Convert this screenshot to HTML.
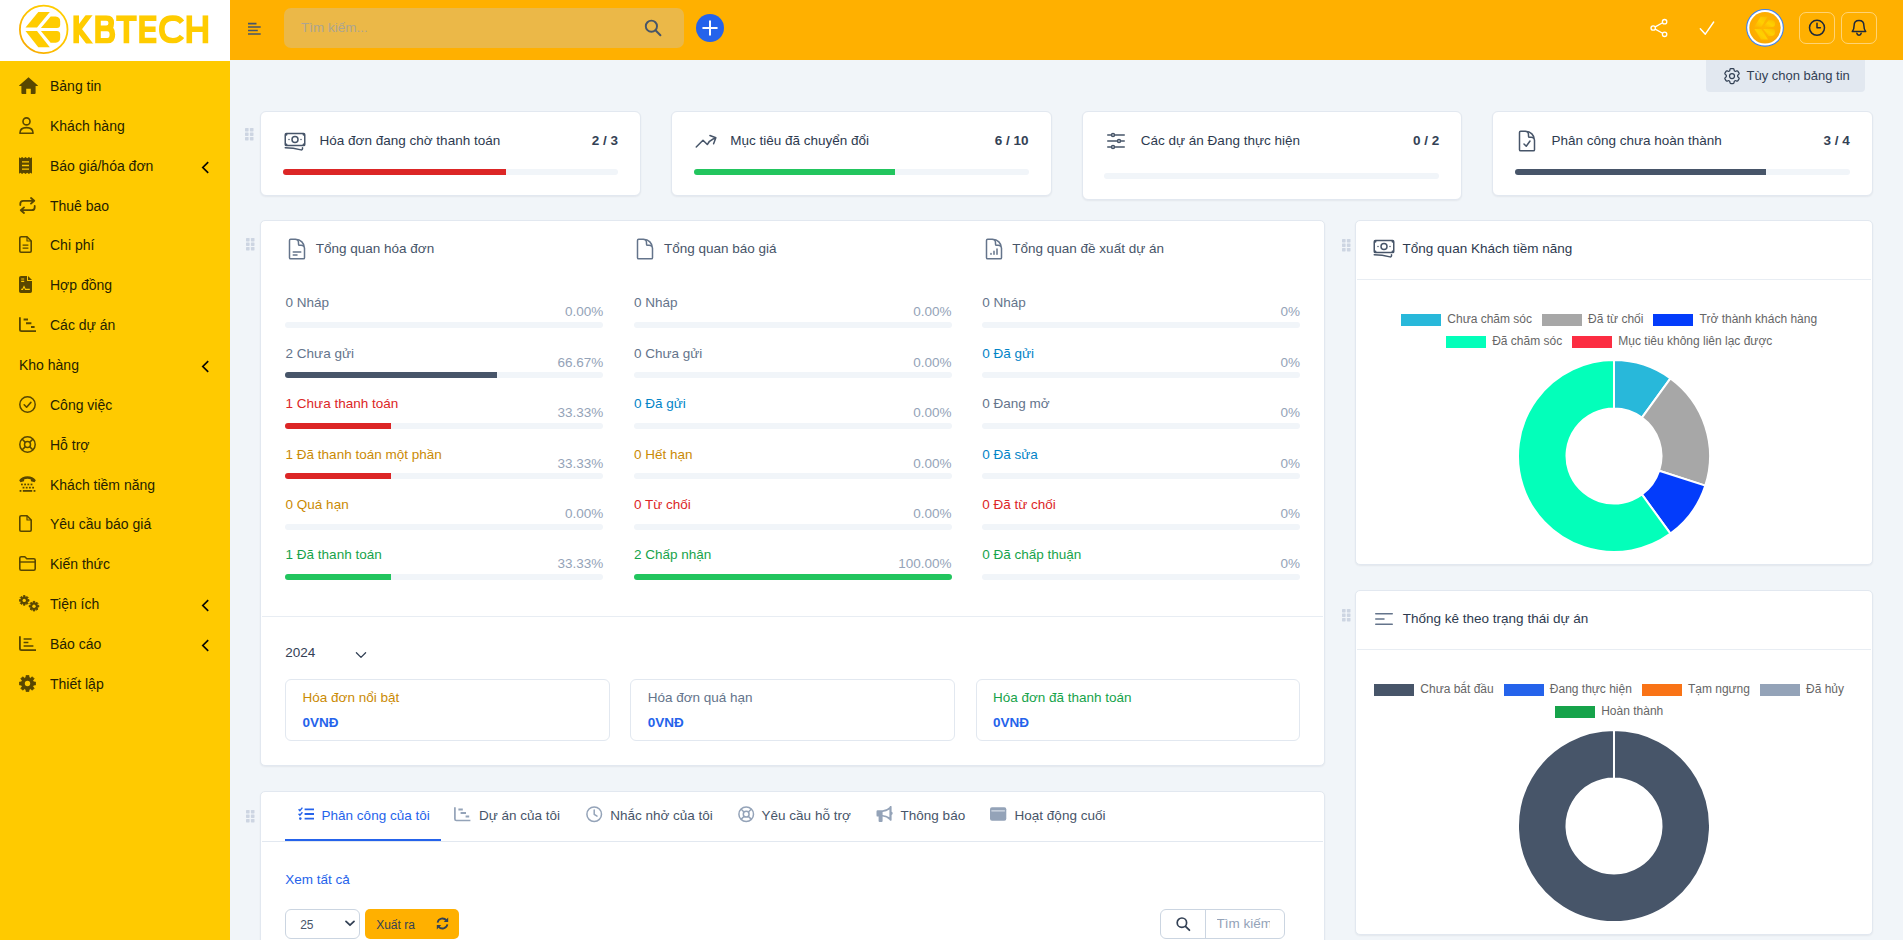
<!DOCTYPE html>
<html lang="vi">
<head>
<meta charset="utf-8">
<title>Dashboard</title>
<style>
*{box-sizing:border-box;margin:0;padding:0}
html,body{width:1903px;height:940px;overflow:hidden;background:#f1f5f9;font-family:"Liberation Sans",sans-serif;font-size:13.5px;color:#334155}
#app{position:relative;width:1903px;height:940px;overflow:hidden}
.abs{position:absolute}
.sm{font-size:14px;line-height:18px;color:#261e00;white-space:nowrap}
/* header */
#logo{position:absolute;left:0;top:0;width:230px;height:61px;background:#fff}
#header{position:absolute;left:230px;top:0;width:1673px;height:60px;background:#ffb000}
#side{position:absolute;left:0;top:61px;width:230px;height:879px;background:#ffca00}
.mi{position:absolute;left:0;width:230px;height:40px;font-size:14px;color:#2a2100}
.mi .t{position:absolute;left:50px;top:11px;line-height:18px;white-space:nowrap}
.mi svg.ic{position:absolute;left:18px;top:10px;width:20px;height:20px}
.mi svg.ar{position:absolute;left:201px;top:15px;width:9px;height:13px}
.card{position:absolute;background:#fff;border:1px solid #e2e8f0;border-radius:6px;box-shadow:0 1px 2px rgba(15,23,42,.06)}
.grip{position:absolute;width:7px;height:11px}
.grip i{position:absolute;width:3px;height:3px;background:#cbd5e1;border-radius:.5px}
.pb{position:absolute;height:6px;border-radius:3px;background:#f1f5f9;overflow:hidden}
.pb b{display:block;height:100%}
.st{position:absolute;white-space:nowrap;line-height:16px}
.cnt{position:absolute;white-space:nowrap;line-height:16px;font-weight:bold;text-align:right}
.row{position:absolute;width:319px;height:30px}
.row .l{position:absolute;left:0;top:0;line-height:16px;white-space:nowrap}
.row .p{position:absolute;right:0;top:9px;line-height:16px;color:#94a3b8;white-space:nowrap}
.row .pb{left:0;top:28px;width:319px;height:5px}
.lg{position:absolute;font-size:12px;color:#666;white-space:nowrap;line-height:14px}
.lb{position:absolute;width:40px;height:12px}
</style>
</head>
<body>
<div id="app">
<!--LOGO-->
<div id="logo">
<svg class="abs" style="left:0;top:0" width="230" height="60" viewBox="0 0 230 60">
<defs><linearGradient id="lg1" x1="0" y1="1" x2="1" y2="0"><stop offset="0" stop-color="#f5a100"/><stop offset=".5" stop-color="#ffc400"/><stop offset="1" stop-color="#ffd000"/></linearGradient></defs>
<circle cx="43.7" cy="29.4" r="23.8" fill="none" stroke="url(#lg1)" stroke-width="1.8"/>
<g fill="#ffcc00">
<path d="M38.3 12.1H49.8L37 27.5H25.5Z"/>
<path d="M50.6 16.6H55.6Q60.2 16.9 60.2 21.5V24.5Q60.2 28.1 56.8 28.1H40.9Z"/>
<path d="M25.5 31H37L49.8 47.3H38.3Z"/>
<path d="M40.9 30.9H56.8Q60.2 30.9 60.2 34.4V37.6Q60.2 42.6 55.6 42.8H50.6Z"/>
</g>
<clipPath id="cpt"><rect x="70" y="15.3" width="140" height="28.1"/></clipPath><g fill="none" stroke="#ffcc00" stroke-width="5.6" stroke-linejoin="miter" clip-path="url(#cpt)">
<path d="M76.2 15.3V43.4M91.8 11.5L78.6 29.2L92.2 47"/>
<path d="M98 18H106.2Q111.3 18 111.3 23Q111.3 28.4 106.2 28.4H98M98 28.4H107.2Q112.4 28.4 112.4 34.4Q112.4 40.7 107.2 40.7H98M98 15.3V43.4" />
<path d="M116.2 18.1H136.7M126.4 18V43.4"/>
<path d="M156.4 18.1H142V40.6H156.4M142 29.3H155.6"/>
<path d="M182 22.3Q178.6 17.9 172.8 17.9Q161.8 18.3 161.8 29.3Q161.8 40.4 172.8 40.8Q178.6 40.8 182 36.4"/>
<path d="M189.3 15.3V43.4M205.4 15.3V43.4M189.3 29.3H205.4"/>
</g>
</svg>
</div>
<!--HEADER-->
<div id="header">
<svg class="abs" style="left:18px;top:22px" width="13" height="13" viewBox="0 0 13 13"><g stroke="#475569" stroke-width="1.7"><path d="M0 1.6H8.5M0 5H12.7M0 8.5H9.8M0 12H12.7"/></g></svg>
<div class="abs" style="left:54px;top:8px;width:400px;height:40px;border-radius:7px;background:#ebb848"></div>
<div class="abs" style="left:71px;top:19px;font-size:13.5px;line-height:18px;color:#aca591">Tìm kiếm...</div>
<svg class="abs" style="left:414px;top:19px" width="18" height="18" viewBox="0 0 18 18"><circle cx="7.4" cy="7.2" r="5.6" fill="none" stroke="#475569" stroke-width="1.9"/><path d="M11.5 11.3L16.4 16.2" stroke="#475569" stroke-width="2" stroke-linecap="round"/></svg>
<div class="abs" style="left:466px;top:14px;width:28px;height:28px;border-radius:14px;background:#2563eb"></div>
<svg class="abs" style="left:466px;top:14px" width="28" height="28" viewBox="0 0 28 28"><path d="M14 7.2V20.8M7.2 14H20.8" stroke="#fff" stroke-width="2" stroke-linecap="round"/></svg>
<!-- share -->
<svg class="abs" style="left:1418px;top:17px" width="22" height="22" viewBox="0 0 22 22"><g fill="none" stroke="#fff" stroke-width="1.3"><circle cx="16.6" cy="4.7" r="2.2"/><circle cx="5.2" cy="11" r="2.2"/><circle cx="16.6" cy="17.3" r="2.2"/><path d="M7.2 9.9L14.6 5.8M7.2 12.1L14.6 16.2"/></g></svg>
<!-- check -->
<svg class="abs" style="left:1468px;top:19px" width="18" height="18" viewBox="0 0 18 18"><path d="M2.3 9.7L7.3 15.2L15.7 3" fill="none" stroke="#fff" stroke-width="1.4" stroke-linecap="round" stroke-linejoin="round"/></svg>
<!-- avatar -->
<svg class="abs" style="left:1515px;top:8px" width="40" height="40" viewBox="0 0 40 40">
<defs><radialGradient id="av" cx=".5" cy=".45" r=".6"><stop offset="0" stop-color="#ffb800"/><stop offset=".75" stop-color="#fdac00"/><stop offset="1" stop-color="#f8a300"/></radialGradient>
<linearGradient id="av2" x1="0" y1="1" x2="1" y2="0"><stop offset="0" stop-color="#fdb400"/><stop offset=".5" stop-color="#ffd000"/><stop offset="1" stop-color="#f8bd00"/></linearGradient></defs>
<circle cx="20" cy="19.8" r="18.9" fill="#3b82f6"/><circle cx="20" cy="19.8" r="17.8" fill="#fff"/><circle cx="20" cy="19.8" r="15.7" fill="url(#av)"/>
<g fill="url(#av2)"><path d="M15.6 8.8H22.6L16.4 18.8H9.4Z"/><path d="M23.6 12.2H27Q30 12.6 30 15.4V16.6Q30 18.9 27.6 18.9H18.2Z"/><path d="M9.4 21H16.4L23 31.4H16Z"/><path d="M18.2 21H27.6Q30 21 30 23.2V24.6Q30 27.6 27 28H23.6Z"/></g>
</svg>
<!-- clock btn -->
<div class="abs" style="left:1569px;top:12px;width:36px;height:32px;border:1px solid rgba(255,255,255,.45);border-radius:7px"></div>
<svg class="abs" style="left:1577px;top:18px" width="20" height="20" viewBox="0 0 20 20"><circle cx="10" cy="9.8" r="7.5" fill="none" stroke="#1e293b" stroke-width="1.5"/><path d="M10 5.3V9.8H13.4" fill="none" stroke="#1e293b" stroke-width="1.5" stroke-linecap="round" stroke-linejoin="round"/></svg>
<!-- bell btn -->
<div class="abs" style="left:1611px;top:12px;width:36px;height:32px;border:1px solid rgba(255,255,255,.45);border-radius:7px"></div>
<svg class="abs" style="left:1619px;top:18px" width="20" height="20" viewBox="0 0 20 20"><path d="M10 2.6C6.9 2.6 5.1 4.9 5.1 7.8C5.1 10.6 4.4 12.3 3.3 13.6H16.7C15.6 12.3 14.9 10.6 14.9 7.8C14.9 4.9 13.1 2.6 10 2.6Z" fill="none" stroke="#1e293b" stroke-width="1.5" stroke-linejoin="round"/><path d="M7.8 15.2C8 16.5 8.9 17.2 10 17.2C11.1 17.2 12 16.5 12.2 15.2" fill="none" stroke="#1e293b" stroke-width="1.5" stroke-linecap="round"/></svg>
</div>
<!--SIDEBAR-->
<div id="side">
<svg class="abs" style="left:19px;top:16.0px" width="19" height="17" viewBox="0 0 19 17"><path fill="#594700" d="M9.5 0.2L18.9 8.4Q19 9 18.4 9H16.6V16Q16.6 17 15.6 17H11.8V11.8H7.2V17H3.4Q2.4 17 2.4 16V9H0.6Q0 9 0.1 8.4Z"/></svg>
<div class="abs sm" style="left:50px;top:16px">Bảng tin</div>
<svg class="abs" style="left:19px;top:56.0px" width="15" height="17" viewBox="0 0 15 17"><g fill="none" stroke="#594700" stroke-width="1.6"><circle cx="7.5" cy="4.4" r="3.5"/><path d="M0.9 16.2C0.9 12.6 3.4 10.6 7.5 10.6C11.6 10.6 14.1 12.6 14.1 16.2Z" stroke-linejoin="round"/></g></svg>
<div class="abs sm" style="left:50px;top:56px">Khách hàng</div>
<svg class="abs" style="left:19px;top:96.0px" width="13" height="17" viewBox="0 0 13 17"><path fill="#594700" d="M0 0.2L1.4 1.2L3.1 0L4.8 1.2L6.5 0L8.2 1.2L9.9 0L11.6 1.2L13 0.2V16.8L11.6 15.8L9.9 17L8.2 15.8L6.5 17L4.8 15.8L3.1 17L1.4 15.8L0 16.8Z"/><path stroke="#ffca00" stroke-width="1.3" d="M3 4.9H10M3 8.5H10M3 12.1H10"/></svg>
<div class="abs sm" style="left:50px;top:96px">Báo giá/hóa đơn</div>
<svg class="abs" style="left:201px;top:100px" width="9" height="13" viewBox="0 0 9 13"><path d="M7.2 1.2L1.8 6.5L7.2 11.8" fill="none" stroke="#0a0800" stroke-width="1.7" stroke-linejoin="miter"/></svg>
<svg class="abs" style="left:19px;top:136.0px" width="17" height="17" viewBox="0 0 17 17"><g fill="none" stroke="#594700" stroke-width="1.8" stroke-linecap="round" stroke-linejoin="round"><path d="M1.3 8V6.8Q1.3 3.8 4.3 3.8H15M12 1L15.2 3.8L12 6.6"/><path d="M15.7 9V10.2Q15.7 13.2 12.7 13.2H2M5 10.4L1.8 13.2L5 16"/></g></svg>
<div class="abs sm" style="left:50px;top:136px">Thuê bao</div>
<svg class="abs" style="left:19px;top:175.0px" width="13" height="17" viewBox="0 0 13 17"><g fill="none" stroke="#594700" stroke-width="1.6" stroke-linejoin="round"><path d="M2.2 0.8H8L12.2 5V15Q12.2 16.2 11 16.2H2Q0.8 16.2 0.8 15V2Q0.8 0.8 2.2 0.8Z"/><path d="M8 0.8V5H12.2" stroke-width="1.2"/><path d="M3.6 9.2H9.4M3.6 12.2H9.4" stroke-width="1.3"/></g></svg>
<div class="abs sm" style="left:50px;top:175px">Chi phí</div>
<svg class="abs" style="left:19px;top:215.0px" width="13" height="17" viewBox="0 0 13 17"><path fill="#594700" d="M2 0H8V5H13V15.2Q13 17 11.2 17H1.8Q0 17 0 15.2V1.8Q0 0 2 0ZM9 0L13 4H9Z"/><path stroke="#ffca00" stroke-width="1.1" fill="none" d="M2.2 3H5.2M2.2 5.4H5.2M2.2 13.4H3.6L5 10.6L6.4 13.4H10.8"/></svg>
<div class="abs sm" style="left:50px;top:215px">Hợp đồng</div>
<svg class="abs" style="left:19px;top:256.0px" width="17" height="15" viewBox="0 0 17 15"><g fill="none" stroke="#594700"><path d="M0.9 0.2V12.5Q0.9 14.1 2.5 14.1H17" stroke-width="1.8"/><path d="M4.6 2.6H9M7 6.3H12.4M12 10H15.6" stroke-width="2"/></g></svg>
<div class="abs sm" style="left:50px;top:255px">Các dự án</div>
<div class="abs sm" style="left:19px;top:295px">Kho hàng</div>
<svg class="abs" style="left:201px;top:299px" width="9" height="13" viewBox="0 0 9 13"><path d="M7.2 1.2L1.8 6.5L7.2 11.8" fill="none" stroke="#0a0800" stroke-width="1.7" stroke-linejoin="miter"/></svg>
<svg class="abs" style="left:19px;top:335.0px" width="17" height="17" viewBox="0 0 17 17"><g fill="none" stroke="#594700" stroke-width="1.5"><circle cx="8.5" cy="8.5" r="7.7"/><path d="M5.2 8.8L7.6 11.2L11.9 6.4" stroke-linecap="round" stroke-linejoin="round" stroke-width="1.6"/></g></svg>
<div class="abs sm" style="left:50px;top:335px">Công việc</div>
<svg class="abs" style="left:19px;top:375.0px" width="17" height="17" viewBox="0 0 17 17"><g fill="none" stroke="#594700" stroke-width="1.5"><circle cx="8.5" cy="8.5" r="7.7"/><circle cx="8.5" cy="8.5" r="3"/><path d="M3 3L6.4 6.4M14 3L10.6 6.4M3 14L6.4 10.6M14 14L10.6 10.6"/></g></svg>
<div class="abs sm" style="left:50px;top:375px">Hỗ trợ</div>
<svg class="abs" style="left:19px;top:415.0px" width="17" height="17" viewBox="0 0 17 17"><path fill="#594700" d="M0.2 4.2C2 1.6 5 0.3 8.5 0.3C12 0.3 15 1.6 16.8 4.2L15.6 6.2L12 5.2L11.7 3.2C9.6 2.5 7.4 2.5 5.3 3.2L5 5.2L1.4 6.2Z"/><g fill="#594700"><rect x="2" y="7.6" width="1.8" height="1.7"/><rect x="5.2" y="7.6" width="1.8" height="1.7"/><rect x="8.4" y="7.6" width="1.8" height="1.7"/><rect x="11.6" y="7.6" width="1.8" height="1.7"/><rect x="3.6" y="10.8" width="1.8" height="1.7"/><rect x="6.8" y="10.8" width="1.8" height="1.7"/><rect x="10" y="10.8" width="1.8" height="1.7"/><rect x="13.2" y="10.8" width="1.8" height="1.7"/><rect x="0.6" y="14" width="1.8" height="1.8"/><rect x="3.8" y="14" width="9.4" height="1.8"/><rect x="14.6" y="14" width="1.8" height="1.8"/></g></svg>
<div class="abs sm" style="left:50px;top:415px">Khách tiềm năng</div>
<svg class="abs" style="left:19px;top:454.0px" width="13" height="17" viewBox="0 0 13 17"><g fill="none" stroke="#594700" stroke-width="1.6" stroke-linejoin="round"><path d="M2.2 0.8H8L12.2 5V15Q12.2 16.2 11 16.2H2Q0.8 16.2 0.8 15V2Q0.8 0.8 2.2 0.8Z"/><path d="M8 0.8V5H12.2" stroke-width="1.2"/></g></svg>
<div class="abs sm" style="left:50px;top:454px">Yêu cầu báo giá</div>
<svg class="abs" style="left:19px;top:495.0px" width="17" height="15" viewBox="0 0 17 15"><g fill="none" stroke="#594700" stroke-width="1.6" stroke-linejoin="round"><path d="M2.2 0.8H5.8L7.8 2.8H14.8Q16.2 2.8 16.2 4.2V12.8Q16.2 14.2 14.8 14.2H2.2Q0.8 14.2 0.8 12.8V2.2Q0.8 0.8 2.2 0.8Z"/><path d="M0.8 6H16.2" stroke-width="1.4"/></g></svg>
<div class="abs sm" style="left:50px;top:494px">Kiến thức</div>
<svg class="abs" style="left:19px;top:534.0px" width="21" height="17" viewBox="0 0 21 17"><path fill="#594700" stroke="#594700" stroke-width="0.8" stroke-linejoin="round" d="M4.36 0.57L6.04 0.57L6.10 1.91L7.03 2.30L8.02 1.39L9.21 2.58L8.30 3.57L8.69 4.50L10.03 4.56L10.03 6.24L8.69 6.30L8.30 7.23L9.21 8.22L8.02 9.41L7.03 8.50L6.10 8.89L6.04 10.23L4.36 10.23L4.30 8.89L3.37 8.50L2.38 9.41L1.19 8.22L2.10 7.23L1.71 6.30L0.37 6.24L0.37 4.56L1.71 4.50L2.10 3.57L1.19 2.58L2.38 1.39L3.37 2.30L4.30 1.91Z"/><circle cx="5.2" cy="5.4" r="1.7" fill="#ffca00"/><path fill="#594700" stroke="#594700" stroke-width="0.8" stroke-linejoin="round" d="M14.16 6.37L15.84 6.37L15.90 7.71L16.83 8.10L17.82 7.19L19.01 8.38L18.10 9.37L18.49 10.30L19.83 10.36L19.83 12.04L18.49 12.10L18.10 13.03L19.01 14.02L17.82 15.21L16.83 14.30L15.90 14.69L15.84 16.03L14.16 16.03L14.10 14.69L13.17 14.30L12.18 15.21L10.99 14.02L11.90 13.03L11.51 12.10L10.17 12.04L10.17 10.36L11.51 10.30L11.90 9.37L10.99 8.38L12.18 7.19L13.17 8.10L14.10 7.71Z"/><circle cx="15" cy="11.2" r="1.7" fill="#ffca00"/></svg>
<div class="abs sm" style="left:50px;top:534px">Tiện ích</div>
<svg class="abs" style="left:201px;top:538px" width="9" height="13" viewBox="0 0 9 13"><path d="M7.2 1.2L1.8 6.5L7.2 11.8" fill="none" stroke="#0a0800" stroke-width="1.7" stroke-linejoin="miter"/></svg>
<svg class="abs" style="left:19px;top:575.0px" width="17" height="15" viewBox="0 0 17 15"><g fill="none" stroke="#594700"><path d="M0.9 0.2V12.5Q0.9 14.1 2.5 14.1H17" stroke-width="1.8"/><path d="M4.6 2.9H12.6M4.6 6.5H9.4M4.6 10.1H14.4" stroke-width="1.5"/></g></svg>
<div class="abs sm" style="left:50px;top:574px">Báo cáo</div>
<svg class="abs" style="left:201px;top:578px" width="9" height="13" viewBox="0 0 9 13"><path d="M7.2 1.2L1.8 6.5L7.2 11.8" fill="none" stroke="#0a0800" stroke-width="1.7" stroke-linejoin="miter"/></svg>
<svg class="abs" style="left:19px;top:614.0px" width="17" height="17" viewBox="0 0 17 17"><path fill="#594700" stroke="#594700" stroke-width="0.8" stroke-linejoin="round" d="M7.09 0.42L9.91 0.42L10.04 2.49L11.66 3.16L13.22 1.79L15.21 3.78L13.84 5.34L14.51 6.96L16.58 7.09L16.58 9.91L14.51 10.04L13.84 11.66L15.21 13.22L13.22 15.21L11.66 13.84L10.04 14.51L9.91 16.58L7.09 16.58L6.96 14.51L5.34 13.84L3.78 15.21L1.79 13.22L3.16 11.66L2.49 10.04L0.42 9.91L0.42 7.09L2.49 6.96L3.16 5.34L1.79 3.78L3.78 1.79L5.34 3.16L6.96 2.49Z"/><circle cx="8.5" cy="8.5" r="2.7" fill="#ffca00"/></svg>
<div class="abs sm" style="left:50px;top:614px">Thiết lập</div>
</div>
<!--MAIN-->
<div id="main">
<div class="abs" style="left:1706px;top:60px;width:159px;height:31.5px;background:#e2e8f0;border-radius:0 0 4px 4px"></div>
<svg class="abs" style="left:1722px;top:66.1px" width="20" height="20" viewBox="0 0 24 24" fill="none" stroke="#334155" stroke-width="1.5" stroke-linecap="round" stroke-linejoin="round"><path d="M9.594 3.94c.09-.542.56-.94 1.11-.94h2.593c.55 0 1.02.398 1.11.94l.213 1.281c.063.374.313.686.645.87.074.04.147.083.22.127.324.196.72.257 1.075.124l1.217-.456a1.125 1.125 0 011.37.49l1.296 2.247a1.125 1.125 0 01-.26 1.431l-1.003.827c-.293.24-.438.613-.431.992a6.759 6.759 0 010 .255c-.007.378.138.75.43.99l1.005.828c.424.35.534.954.26 1.43l-1.298 2.247a1.125 1.125 0 01-1.369.491l-1.217-.456c-.355-.133-.75-.072-1.076.124a6.57 6.57 0 01-.22.128c-.331.183-.581.495-.644.869l-.213 1.28c-.09.543-.56.941-1.11.941h-2.594c-.55 0-1.02-.398-1.11-.94l-.213-1.281c-.062-.374-.312-.686-.644-.87a6.52 6.52 0 01-.22-.127c-.325-.196-.72-.257-1.076-.124l-1.217.456a1.125 1.125 0 01-1.369-.49l-1.297-2.247a1.125 1.125 0 01.26-1.431l1.004-.827c.292-.24.437-.613.43-.992a6.932 6.932 0 010-.255c.007-.378-.138-.75-.43-.99l-1.004-.828a1.125 1.125 0 01-.26-1.43l1.297-2.247a1.125 1.125 0 011.37-.491l1.216.456c.356.133.751.072 1.076-.124.072-.044.146-.087.22-.128.332-.183.582-.495.644-.869l.214-1.281zM15 12a3 3 0 11-6 0 3 3 0 016 0z"/></svg>
<div class="abs" style="left:1746.5px;top:68.19px;font-size:13px;line-height:16px;color:#334155;white-space:nowrap;">Tùy chọn bảng tin</div>
<svg class="abs" style="left:245px;top:128.4px" width="9" height="13" viewBox="0 0 9 13"><g fill="#cdd5e2"><rect x="0" y="0" width="3.6" height="3.4" rx=".6"/><rect x="4.9" y="0" width="3.6" height="3.4" rx=".6"/><rect x="0" y="4.5" width="3.6" height="3.4" rx=".6"/><rect x="4.9" y="4.5" width="3.6" height="3.4" rx=".6"/><rect x="0" y="9" width="3.6" height="3.4" rx=".6"/><rect x="4.9" y="9" width="3.6" height="3.4" rx=".6"/></g></svg>
<div class="card" style="left:260.3px;top:111px;width:380.8px;height:85px;border-radius:6px"></div>
<svg class="abs" style="left:283.0px;top:128.9px" width="24" height="24" viewBox="0 0 24 24" fill="none" stroke="#475569" stroke-width="1.5" stroke-linecap="round" stroke-linejoin="round"><path d="M2.25 18.75a60.07 60.07 0 0115.797 2.101c.727.198 1.453-.342 1.453-1.096V18.75M3.75 4.5v.75A.75.75 0 013 6h-.75m0 0v-.375c0-.621.504-1.125 1.125-1.125H20.25M2.25 6v9m18-10.5v.75c0 .414.336.75.75.75h.75m-1.5-1.5h.375c.621 0 1.125.504 1.125 1.125v9.75c0 .621-.504 1.125-1.125 1.125h-.375m1.5-1.5H21a.75.75 0 00-.75.75v.75m0 0H3.75m0 0h-.375a1.125 1.125 0 01-1.125-1.125V15m1.5 1.5v-.75A.75.75 0 003 15h-.75M15 10.5a3 3 0 11-6 0 3 3 0 016 0zm3 0h.008v.008H18V10.5zm-12 0h.008v.008H6V10.5z"/></svg>
<div class="abs" style="left:319.6px;top:133.02px;font-size:13.5px;line-height:16px;color:#2d3a4f;white-space:nowrap;">Hóa đơn đang chờ thanh toán</div>
<div class="abs" style="right:1285.0px;top:133.02px;font-size:13.5px;line-height:16px;color:#334155;white-space:nowrap;font-weight:bold;">2 / 3</div>
<div class="pb" style="left:283.0px;top:169px;width:335.2px;height:6px"><b style="width:66.667%;background:#dc2626"></b></div>
<div class="card" style="left:670.9px;top:111px;width:380.8px;height:85px;border-radius:6px"></div>
<svg class="abs" style="left:693.6px;top:128.9px" width="24" height="24" viewBox="0 0 24 24" fill="none" stroke="#475569" stroke-width="1.5" stroke-linecap="round" stroke-linejoin="round"><path d="M2.25 18L9 11.25l4.306 4.307a11.95 11.95 0 015.814-5.519l2.74-1.22m0 0l-5.94-2.28m5.94 2.28l-2.28 5.941"/></svg>
<div class="abs" style="left:730.2px;top:133.02px;font-size:13.5px;line-height:16px;color:#2d3a4f;white-space:nowrap;">Mục tiêu đã chuyển đổi</div>
<div class="abs" style="right:874.4000000000001px;top:133.02px;font-size:13.5px;line-height:16px;color:#334155;white-space:nowrap;font-weight:bold;">6 / 10</div>
<div class="pb" style="left:693.6px;top:169px;width:335.2px;height:6px"><b style="width:60.000%;background:#22c55e"></b></div>
<div class="card" style="left:1081.5px;top:111px;width:380.8px;height:89px;border-radius:6px"></div>
<svg class="abs" style="left:1104.2px;top:128.9px" width="24" height="24" viewBox="0 0 24 24" fill="none" stroke="#475569" stroke-width="1.5" stroke-linecap="round" stroke-linejoin="round"><path d="M10.5 6h9.75M10.5 6a1.5 1.5 0 11-3 0m3 0a1.5 1.5 0 10-3 0M3.75 6H7.5m3 12h9.75m-9.75 0a1.5 1.5 0 01-3 0m3 0a1.5 1.5 0 00-3 0m-3.75 0H7.5m9-6h3.75m-3.75 0a1.5 1.5 0 01-3 0m3 0a1.5 1.5 0 00-3 0m-9.75 0h9.75"/></svg>
<div class="abs" style="left:1140.8px;top:133.02px;font-size:13.5px;line-height:16px;color:#2d3a4f;white-space:nowrap;">Các dự án Đang thực hiện</div>
<div class="abs" style="right:463.79999999999995px;top:133.02px;font-size:13.5px;line-height:16px;color:#334155;white-space:nowrap;font-weight:bold;">0 / 2</div>
<div class="pb" style="left:1104.2px;top:173px;width:335.2px;height:6px"></div>
<div class="card" style="left:1492.1px;top:111px;width:380.8px;height:85px;border-radius:6px"></div>
<svg class="abs" style="left:1514.8px;top:128.9px" width="24" height="24" viewBox="0 0 24 24" fill="none" stroke="#475569" stroke-width="1.5" stroke-linecap="round" stroke-linejoin="round"><path d="M10.125 2.25h-4.5c-.621 0-1.125.504-1.125 1.125v17.25c0 .621.504 1.125 1.125 1.125h12.75c.621 0 1.125-.504 1.125-1.125v-9M10.125 2.25h.375a9 9 0 019 9v.375M10.125 2.25A3.375 3.375 0 0113.5 5.625v1.5c0 .621.504 1.125 1.125 1.125h1.5a3.375 3.375 0 013.375 3.375M9 15l2.25 2.25L15 12"/></svg>
<div class="abs" style="left:1551.4px;top:133.02px;font-size:13.5px;line-height:16px;color:#2d3a4f;white-space:nowrap;">Phân công chưa hoàn thành</div>
<div class="abs" style="right:53.200000000000045px;top:133.02px;font-size:13.5px;line-height:16px;color:#334155;white-space:nowrap;font-weight:bold;">3 / 4</div>
<div class="pb" style="left:1514.8px;top:169px;width:335.2px;height:6px"><b style="width:75.000%;background:#475569"></b></div>
<div class="card" style="left:260px;top:220px;width:1065px;height:546px;border-radius:5px"></div>
<svg class="abs" style="left:246px;top:238.4px" width="9" height="13" viewBox="0 0 9 13"><g fill="#cdd5e2"><rect x="0" y="0" width="3.6" height="3.4" rx=".6"/><rect x="4.9" y="0" width="3.6" height="3.4" rx=".6"/><rect x="0" y="4.5" width="3.6" height="3.4" rx=".6"/><rect x="4.9" y="4.5" width="3.6" height="3.4" rx=".6"/><rect x="0" y="9" width="3.6" height="3.4" rx=".6"/><rect x="4.9" y="9" width="3.6" height="3.4" rx=".6"/></g></svg>
<svg class="abs" style="left:285.0px;top:236.9px" width="24" height="24" viewBox="0 0 24 24" fill="none" stroke="#64748b" stroke-width="1.5" stroke-linecap="round" stroke-linejoin="round"><path d="M19.5 14.25v-2.625a3.375 3.375 0 00-3.375-3.375h-1.5A1.125 1.125 0 0113.5 7.125v-1.5a3.375 3.375 0 00-3.375-3.375H8.25m0 12.75h7.5m-7.5 3H12M10.5 2.25H5.625c-.621 0-1.125.504-1.125 1.125v17.25c0 .621.504 1.125 1.125 1.125h12.75c.621 0 1.125-.504 1.125-1.125V11.25a9 9 0 00-9-9z"/></svg>
<div class="abs" style="left:315.7px;top:240.72px;font-size:13.5px;line-height:16px;color:#475569;white-space:nowrap;">Tổng quan hóa đơn</div>
<div class="abs" style="left:285.6px;top:295px;font-size:13.5px;line-height:16px;color:#64748b;white-space:nowrap">0 Nháp</div>
<div class="abs" style="right:1299.7px;top:304px;font-size:13.5px;line-height:16px;color:#94a3b8;white-space:nowrap">0.00%</div>
<div class="pb" style="left:285.3px;top:322px;width:318px;height:6px"></div>
<div class="abs" style="left:285.6px;top:346px;font-size:13.5px;line-height:16px;color:#64748b;white-space:nowrap">2 Chưa gửi</div>
<div class="abs" style="right:1299.7px;top:355px;font-size:13.5px;line-height:16px;color:#94a3b8;white-space:nowrap">66.67%</div>
<div class="pb" style="left:285.3px;top:372px;width:318px;height:6px"><b style="width:66.670%;background:#475569"></b></div>
<div class="abs" style="left:285.6px;top:396px;font-size:13.5px;line-height:16px;color:#dc2626;white-space:nowrap">1 Chưa thanh toán</div>
<div class="abs" style="right:1299.7px;top:405px;font-size:13.5px;line-height:16px;color:#94a3b8;white-space:nowrap">33.33%</div>
<div class="pb" style="left:285.3px;top:423px;width:318px;height:6px"><b style="width:33.330%;background:#dc2626"></b></div>
<div class="abs" style="left:285.6px;top:447px;font-size:13.5px;line-height:16px;color:#ca8a04;white-space:nowrap">1 Đã thanh toán một phần</div>
<div class="abs" style="right:1299.7px;top:456px;font-size:13.5px;line-height:16px;color:#94a3b8;white-space:nowrap">33.33%</div>
<div class="pb" style="left:285.3px;top:473px;width:318px;height:6px"><b style="width:33.330%;background:#dc2626"></b></div>
<div class="abs" style="left:285.6px;top:497px;font-size:13.5px;line-height:16px;color:#ca8a04;white-space:nowrap">0 Quá hạn</div>
<div class="abs" style="right:1299.7px;top:506px;font-size:13.5px;line-height:16px;color:#94a3b8;white-space:nowrap">0.00%</div>
<div class="pb" style="left:285.3px;top:524px;width:318px;height:6px"></div>
<div class="abs" style="left:285.6px;top:547px;font-size:13.5px;line-height:16px;color:#16a34a;white-space:nowrap">1 Đã thanh toán</div>
<div class="abs" style="right:1299.7px;top:556px;font-size:13.5px;line-height:16px;color:#94a3b8;white-space:nowrap">33.33%</div>
<div class="pb" style="left:285.3px;top:574px;width:318px;height:6px"><b style="width:33.330%;background:#22c55e"></b></div>
<svg class="abs" style="left:633.3px;top:236.9px" width="24" height="24" viewBox="0 0 24 24" fill="none" stroke="#64748b" stroke-width="1.5" stroke-linecap="round" stroke-linejoin="round"><path d="M19.5 14.25v-2.625a3.375 3.375 0 00-3.375-3.375h-1.5A1.125 1.125 0 0113.5 7.125v-1.5a3.375 3.375 0 00-3.375-3.375H8.25m2.25 0H5.625c-.621 0-1.125.504-1.125 1.125v17.25c0 .621.504 1.125 1.125 1.125h12.75c.621 0 1.125-.504 1.125-1.125V11.25a9 9 0 00-9-9z"/></svg>
<div class="abs" style="left:664.0px;top:240.72px;font-size:13.5px;line-height:16px;color:#475569;white-space:nowrap;">Tổng quan báo giá</div>
<div class="abs" style="left:633.9px;top:295px;font-size:13.5px;line-height:16px;color:#64748b;white-space:nowrap">0 Nháp</div>
<div class="abs" style="right:951.4px;top:304px;font-size:13.5px;line-height:16px;color:#94a3b8;white-space:nowrap">0.00%</div>
<div class="pb" style="left:633.6px;top:322px;width:318px;height:6px"></div>
<div class="abs" style="left:633.9px;top:346px;font-size:13.5px;line-height:16px;color:#64748b;white-space:nowrap">0 Chưa gửi</div>
<div class="abs" style="right:951.4px;top:355px;font-size:13.5px;line-height:16px;color:#94a3b8;white-space:nowrap">0.00%</div>
<div class="pb" style="left:633.6px;top:372px;width:318px;height:6px"></div>
<div class="abs" style="left:633.9px;top:396px;font-size:13.5px;line-height:16px;color:#0284c7;white-space:nowrap">0 Đã gửi</div>
<div class="abs" style="right:951.4px;top:405px;font-size:13.5px;line-height:16px;color:#94a3b8;white-space:nowrap">0.00%</div>
<div class="pb" style="left:633.6px;top:423px;width:318px;height:6px"></div>
<div class="abs" style="left:633.9px;top:447px;font-size:13.5px;line-height:16px;color:#ca8a04;white-space:nowrap">0 Hết hạn</div>
<div class="abs" style="right:951.4px;top:456px;font-size:13.5px;line-height:16px;color:#94a3b8;white-space:nowrap">0.00%</div>
<div class="pb" style="left:633.6px;top:473px;width:318px;height:6px"></div>
<div class="abs" style="left:633.9px;top:497px;font-size:13.5px;line-height:16px;color:#dc2626;white-space:nowrap">0 Từ chối</div>
<div class="abs" style="right:951.4px;top:506px;font-size:13.5px;line-height:16px;color:#94a3b8;white-space:nowrap">0.00%</div>
<div class="pb" style="left:633.6px;top:524px;width:318px;height:6px"></div>
<div class="abs" style="left:633.9px;top:547px;font-size:13.5px;line-height:16px;color:#16a34a;white-space:nowrap">2 Chấp nhận</div>
<div class="abs" style="right:951.4px;top:556px;font-size:13.5px;line-height:16px;color:#94a3b8;white-space:nowrap">100.00%</div>
<div class="pb" style="left:633.6px;top:574px;width:318px;height:6px"><b style="width:100.000%;background:#22c55e"></b></div>
<svg class="abs" style="left:981.6px;top:236.9px" width="24" height="24" viewBox="0 0 24 24" fill="none" stroke="#64748b" stroke-width="1.5" stroke-linecap="round" stroke-linejoin="round"><path d="M19.5 14.25v-2.625a3.375 3.375 0 00-3.375-3.375h-1.5A1.125 1.125 0 0113.5 7.125v-1.5a3.375 3.375 0 00-3.375-3.375H8.25M9 16.5v.75m3-3v3M15 12v5.25m-4.5-15H5.625c-.621 0-1.125.504-1.125 1.125v17.25c0 .621.504 1.125 1.125 1.125h12.75c.621 0 1.125-.504 1.125-1.125V11.25a9 9 0 00-9-9z"/></svg>
<div class="abs" style="left:1012.3px;top:240.72px;font-size:13.5px;line-height:16px;color:#475569;white-space:nowrap;">Tổng quan đề xuất dự án</div>
<div class="abs" style="left:982.1999999999999px;top:295px;font-size:13.5px;line-height:16px;color:#64748b;white-space:nowrap">0 Nháp</div>
<div class="abs" style="right:603.0999999999999px;top:304px;font-size:13.5px;line-height:16px;color:#94a3b8;white-space:nowrap">0%</div>
<div class="pb" style="left:981.9px;top:322px;width:318px;height:6px"></div>
<div class="abs" style="left:982.1999999999999px;top:346px;font-size:13.5px;line-height:16px;color:#0284c7;white-space:nowrap">0 Đã gửi</div>
<div class="abs" style="right:603.0999999999999px;top:355px;font-size:13.5px;line-height:16px;color:#94a3b8;white-space:nowrap">0%</div>
<div class="pb" style="left:981.9px;top:372px;width:318px;height:6px"></div>
<div class="abs" style="left:982.1999999999999px;top:396px;font-size:13.5px;line-height:16px;color:#64748b;white-space:nowrap">0 Đang mở</div>
<div class="abs" style="right:603.0999999999999px;top:405px;font-size:13.5px;line-height:16px;color:#94a3b8;white-space:nowrap">0%</div>
<div class="pb" style="left:981.9px;top:423px;width:318px;height:6px"></div>
<div class="abs" style="left:982.1999999999999px;top:447px;font-size:13.5px;line-height:16px;color:#0284c7;white-space:nowrap">0 Đã sửa</div>
<div class="abs" style="right:603.0999999999999px;top:456px;font-size:13.5px;line-height:16px;color:#94a3b8;white-space:nowrap">0%</div>
<div class="pb" style="left:981.9px;top:473px;width:318px;height:6px"></div>
<div class="abs" style="left:982.1999999999999px;top:497px;font-size:13.5px;line-height:16px;color:#dc2626;white-space:nowrap">0 Đã từ chối</div>
<div class="abs" style="right:603.0999999999999px;top:506px;font-size:13.5px;line-height:16px;color:#94a3b8;white-space:nowrap">0%</div>
<div class="pb" style="left:981.9px;top:524px;width:318px;height:6px"></div>
<div class="abs" style="left:982.1999999999999px;top:547px;font-size:13.5px;line-height:16px;color:#16a34a;white-space:nowrap">0 Đã chấp thuận</div>
<div class="abs" style="right:603.0999999999999px;top:556px;font-size:13.5px;line-height:16px;color:#94a3b8;white-space:nowrap">0%</div>
<div class="pb" style="left:981.9px;top:574px;width:318px;height:6px"></div>
<div class="abs" style="left:262px;top:616px;width:1061.3px;height:1px;background:#e8edf3"></div>
<div class="abs" style="left:285.2px;top:644.92px;font-size:13.5px;line-height:16px;color:#334155;white-space:nowrap;">2024</div>
<svg class="abs" style="left:354.6px;top:650.5px" width="12" height="9" viewBox="0 0 12 9"><path d="M1.4 1.8L6 6.4L10.6 1.8" fill="none" stroke="#334155" stroke-width="1.3" stroke-linecap="round" stroke-linejoin="round"/></svg>
<div class="abs" style="left:285.2px;top:679.4px;width:324.4px;height:62px;border:1px solid #e2e8f0;border-radius:6px"></div>
<div class="abs" style="left:302.5px;top:689.92px;font-size:13.5px;line-height:16px;color:#ca8a04;white-space:nowrap;">Hóa đơn nổi bật</div>
<div class="abs" style="left:302.5px;top:714.72px;font-size:13.5px;line-height:16px;color:#2563eb;white-space:nowrap;font-weight:bold;">0VNĐ</div>
<div class="abs" style="left:630.4px;top:679.4px;width:324.4px;height:62px;border:1px solid #e2e8f0;border-radius:6px"></div>
<div class="abs" style="left:647.7px;top:689.92px;font-size:13.5px;line-height:16px;color:#64748b;white-space:nowrap;">Hóa đơn quá hạn</div>
<div class="abs" style="left:647.7px;top:714.72px;font-size:13.5px;line-height:16px;color:#2563eb;white-space:nowrap;font-weight:bold;">0VNĐ</div>
<div class="abs" style="left:975.6px;top:679.4px;width:324.4px;height:62px;border:1px solid #e2e8f0;border-radius:6px"></div>
<div class="abs" style="left:992.9px;top:689.92px;font-size:13.5px;line-height:16px;color:#16a34a;white-space:nowrap;">Hóa đơn đã thanh toán</div>
<div class="abs" style="left:992.9px;top:714.72px;font-size:13.5px;line-height:16px;color:#2563eb;white-space:nowrap;font-weight:bold;">0VNĐ</div>
<div class="card" style="left:1355px;top:220px;width:518px;height:345px;border-radius:5px"></div>
<svg class="abs" style="left:1342px;top:238.8px" width="9" height="13" viewBox="0 0 9 13"><g fill="#cdd5e2"><rect x="0" y="0" width="3.6" height="3.4" rx=".6"/><rect x="4.9" y="0" width="3.6" height="3.4" rx=".6"/><rect x="0" y="4.5" width="3.6" height="3.4" rx=".6"/><rect x="4.9" y="4.5" width="3.6" height="3.4" rx=".6"/><rect x="0" y="9" width="3.6" height="3.4" rx=".6"/><rect x="4.9" y="9" width="3.6" height="3.4" rx=".6"/></g></svg>
<svg class="abs" style="left:1371.5px;top:236.4px" width="24" height="24" viewBox="0 0 24 24" fill="none" stroke="#475569" stroke-width="1.5" stroke-linecap="round" stroke-linejoin="round"><path d="M2.25 18.75a60.07 60.07 0 0115.797 2.101c.727.198 1.453-.342 1.453-1.096V18.75M3.75 4.5v.75A.75.75 0 013 6h-.75m0 0v-.375c0-.621.504-1.125 1.125-1.125H20.25M2.25 6v9m18-10.5v.75c0 .414.336.75.75.75h.75m-1.5-1.5h.375c.621 0 1.125.504 1.125 1.125v9.75c0 .621-.504 1.125-1.125 1.125h-.375m1.5-1.5H21a.75.75 0 00-.75.75v.75m0 0H3.75m0 0h-.375a1.125 1.125 0 01-1.125-1.125V15m1.5 1.5v-.75A.75.75 0 003 15h-.75M15 10.5a3 3 0 11-6 0 3 3 0 016 0zm3 0h.008v.008H18V10.5zm-12 0h.008v.008H6V10.5z"/></svg>
<div class="abs" style="left:1402.6px;top:240.72px;font-size:13.5px;line-height:16px;color:#2d3a4f;white-space:nowrap;">Tổng quan Khách tiềm năng</div>
<div class="abs" style="left:1357px;top:279px;width:514.3px;height:1px;background:#e8edf3"></div>
<div class="lb" style="left:1401px;top:313.5px;background:#28b8da"></div>
<div class="lg" style="left:1447.3px;top:312.3px">Chưa chăm sóc</div>
<div class="lb" style="left:1542px;top:313.5px;background:#a7a7a7"></div>
<div class="lg" style="left:1588px;top:312.3px">Đã từ chối</div>
<div class="lb" style="left:1653.3px;top:313.5px;background:#033cfb"></div>
<div class="lg" style="left:1699.6px;top:312.3px">Trở thành khách hàng</div>
<div class="lb" style="left:1446px;top:335.5px;background:#03ffba"></div>
<div class="lg" style="left:1492.2px;top:334.3px">Đã chăm sóc</div>
<div class="lb" style="left:1572.2px;top:335.5px;background:#fc2d42"></div>
<div class="lg" style="left:1618.3px;top:334.3px">Mục tiêu không liên lạc được</div>
<svg class="abs" style="left:1514.2px;top:355.7px" width="200" height="200" viewBox="-100 -100 200 200"><path d="M0.00 -96.00A96 96 0 0 1 56.43 -77.67L27.92 -38.43A47.5 47.5 0 0 0 0.00 -47.50Z" fill="#28b8da" stroke="#fff" stroke-width="2" stroke-linejoin="round"/><path d="M56.43 -77.67A96 96 0 0 1 91.30 29.67L45.18 14.68A47.5 47.5 0 0 0 27.92 -38.43Z" fill="#a7a7a7" stroke="#fff" stroke-width="2" stroke-linejoin="round"/><path d="M91.30 29.67A96 96 0 0 1 56.43 77.67L27.92 38.43A47.5 47.5 0 0 0 45.18 14.68Z" fill="#033cfb" stroke="#fff" stroke-width="2" stroke-linejoin="round"/><path d="M56.43 77.67A96 96 0 1 1 -0.00 -96.00L-0.00 -47.50A47.5 47.5 0 1 0 27.92 38.43Z" fill="#03ffba" stroke="#fff" stroke-width="2" stroke-linejoin="round"/></svg>
<div class="card" style="left:1355px;top:590px;width:518px;height:345px;border-radius:5px"></div>
<svg class="abs" style="left:1342px;top:608.7px" width="9" height="13" viewBox="0 0 9 13"><g fill="#cdd5e2"><rect x="0" y="0" width="3.6" height="3.4" rx=".6"/><rect x="4.9" y="0" width="3.6" height="3.4" rx=".6"/><rect x="0" y="4.5" width="3.6" height="3.4" rx=".6"/><rect x="4.9" y="4.5" width="3.6" height="3.4" rx=".6"/><rect x="0" y="9" width="3.6" height="3.4" rx=".6"/><rect x="4.9" y="9" width="3.6" height="3.4" rx=".6"/></g></svg>
<svg class="abs" style="left:1372.2px;top:606.5px" width="24" height="24" viewBox="0 0 24 24" fill="none" stroke="#64748b" stroke-width="1.5" stroke-linecap="round" stroke-linejoin="round"><path d="M3.75 6.75h16.5M3.75 12H12m-8.25 5.25h16.5"/></svg>
<div class="abs" style="left:1402.8px;top:611.32px;font-size:13.5px;line-height:16px;color:#2d3a4f;white-space:nowrap;">Thống kê theo trạng thái dự án</div>
<div class="abs" style="left:1357px;top:649px;width:514.3px;height:1px;background:#e8edf3"></div>
<div class="lb" style="left:1374px;top:683.6px;background:#475569"></div>
<div class="lg" style="left:1420.3px;top:682.4px">Chưa bắt đầu</div>
<div class="lb" style="left:1503.7px;top:683.6px;background:#2563eb"></div>
<div class="lg" style="left:1549.8px;top:682.4px">Đang thực hiện</div>
<div class="lb" style="left:1641.6px;top:683.6px;background:#f97316"></div>
<div class="lg" style="left:1687.9px;top:682.4px">Tạm ngưng</div>
<div class="lb" style="left:1759.8px;top:683.6px;background:#94a3b8"></div>
<div class="lg" style="left:1806px;top:682.4px">Đã hủy</div>
<div class="lb" style="left:1555.2px;top:705.6px;background:#16a34a"></div>
<div class="lg" style="left:1601.2px;top:704.4px">Hoàn thành</div>
<svg class="abs" style="left:1514px;top:725.7px" width="200" height="200" viewBox="-100 -100 200 200"><path d="M0 -96A96 96 0 1 1 -0.01 -96L-0.01 -47.5A47.5 47.5 0 1 0 0 -47.5Z" fill="#475569" stroke="#fff" stroke-width="2" stroke-linejoin="round"/></svg>
<div class="card" style="left:260px;top:791px;width:1065px;height:200px;border-radius:5px"></div>
<svg class="abs" style="left:246px;top:809.5px" width="9" height="13" viewBox="0 0 9 13"><g fill="#cdd5e2"><rect x="0" y="0" width="3.6" height="3.4" rx=".6"/><rect x="4.9" y="0" width="3.6" height="3.4" rx=".6"/><rect x="0" y="4.5" width="3.6" height="3.4" rx=".6"/><rect x="4.9" y="4.5" width="3.6" height="3.4" rx=".6"/><rect x="0" y="9" width="3.6" height="3.4" rx=".6"/><rect x="4.9" y="9" width="3.6" height="3.4" rx=".6"/></g></svg>
<div class="abs" style="left:262px;top:841px;width:1061.3px;height:1px;background:#e2e8f0"></div>
<div class="abs" style="left:285px;top:839px;width:156px;height:2px;background:#2563eb"></div>
<svg class="abs" style="left:297.8px;top:806px" width="17" height="17" viewBox="0 0 17 17"><g fill="none" stroke="#2563eb"><path d="M6.6 3.4H16M6.6 8H16M6.6 12.6H16" stroke-width="1.9"/><path d="M0.6 3.2L1.9 4.6L4.4 1.6M0.6 7.8L1.9 9.2L4.4 6.2" stroke-width="1.4"/></g><rect x="1" y="11.3" width="2.6" height="2.6" rx="1.3" fill="#2563eb"/></svg>
<div class="abs" style="left:321.6px;top:807.72px;font-size:13.5px;line-height:16px;color:#2563eb;white-space:nowrap;">Phân công của tôi</div>
<svg class="abs" style="left:454.4px;top:806px" width="17" height="17" viewBox="0 0 17 17"><g fill="none" stroke="#94a3b8"><path d="M0.9 1.2V13Q0.9 14.5 2.4 14.5H16.4" stroke-width="1.7"/><path d="M4.4 3.5H8.8M6.6 7H12M11.6 10.5H15.2" stroke-width="1.9"/></g></svg>
<div class="abs" style="left:479px;top:807.72px;font-size:13.5px;line-height:16px;color:#475569;white-space:nowrap;">Dự án của tôi</div>
<svg class="abs" style="left:585.8px;top:806px" width="17" height="17" viewBox="0 0 17 17"><g fill="none" stroke="#94a3b8" stroke-width="1.5"><circle cx="8.2" cy="8.2" r="7.3"/><path d="M8.2 4V8.4L11 10.2" stroke-linecap="round" stroke-linejoin="round"/></g></svg>
<div class="abs" style="left:610.2px;top:807.72px;font-size:13.5px;line-height:16px;color:#475569;white-space:nowrap;">Nhắc nhở của tôi</div>
<svg class="abs" style="left:737.7px;top:806px" width="17" height="17" viewBox="0 0 17 17"><g fill="none" stroke="#94a3b8" stroke-width="1.5"><circle cx="8.2" cy="8.2" r="7.3"/><circle cx="8.2" cy="8.2" r="2.9"/><path d="M3 3L6.2 6.2M13.4 3L10.2 6.2M3 13.4L6.2 10.2M13.4 13.4L10.2 10.2"/></g></svg>
<div class="abs" style="left:761.6px;top:807.72px;font-size:13.5px;line-height:16px;color:#475569;white-space:nowrap;">Yêu cầu hỗ trợ</div>
<svg class="abs" style="left:876.4px;top:806px" width="17" height="17" viewBox="0 0 17 17"><path fill="#94a3b8" fill-rule="evenodd" d="M1.7 4.2H6.6Q10.5 4 13.7 0.9V0.6Q13.7 0 14.3 0H15Q15.6 0 15.6 0.6V5.7Q16.7 6 16.7 7.3Q16.7 8.6 15.6 8.9V14.1Q15.6 14.7 15 14.7H14.3Q13.7 14.7 13.7 14.1V13.9Q10.5 10.8 6.6 10.6V15Q6.6 16 5.6 16H3.6Q2.6 16 2.6 15V10.6H1.7Q0.5 10.6 0.5 9.4V5.4Q0.5 4.2 1.7 4.2ZM6.6 5.9V8.9Q10.4 9 13.4 11.3V3.5Q10.4 5.8 6.6 5.9Z"/></svg>
<div class="abs" style="left:900.6px;top:807.72px;font-size:13.5px;line-height:16px;color:#475569;white-space:nowrap;">Thông báo</div>
<svg class="abs" style="left:990.3px;top:806px" width="17" height="17" viewBox="0 0 17 17"><path fill="#94a3b8" d="M2 1.3H14.3Q16.3 1.3 16.3 3.3V12.7Q16.3 14.7 14.3 14.7H2Q0 14.7 0 12.7V3.3Q0 1.3 2 1.3Z"/><path d="M1.4 4.9H14.9" stroke="#e6ebf2" stroke-width="1"/></svg>
<div class="abs" style="left:1014.6px;top:807.72px;font-size:13.5px;line-height:16px;color:#475569;white-space:nowrap;">Hoạt động cuối</div>
<div class="abs" style="left:285.2px;top:871.82px;font-size:13.5px;line-height:16px;color:#2563eb;white-space:nowrap;">Xem tất cả</div>
<div class="abs" style="left:285.2px;top:909px;width:74.6px;height:30px;border:1px solid #cbd5e1;border-radius:6px;background:#fff"></div>
<div class="abs" style="left:300.2px;top:916.74px;font-size:12px;line-height:16px;color:#475569;white-space:nowrap;">25</div>
<svg class="abs" style="left:344px;top:919px" width="12" height="9" viewBox="0 0 12 9"><path d="M2 2.4L6 6.2L10 2.4" fill="none" stroke="#334155" stroke-width="1.8" stroke-linecap="round" stroke-linejoin="round"/></svg>
<div class="abs" style="left:365px;top:909px;width:94px;height:30px;border-radius:5px;background:#ffb000"></div>
<div class="abs" style="left:376.2px;top:916.64px;font-size:12px;line-height:16px;color:#334155;white-space:nowrap;">Xuất ra</div>
<svg class="abs" style="left:435.5px;top:917px" width="13" height="13" viewBox="0 0 13 13"><g fill="none" stroke="#334155" stroke-width="1.8"><path d="M1.6 5.6A5 5 0 0 1 10.4 3.4"/><path d="M11.4 7.4A5 5 0 0 1 2.6 9.6"/></g><path d="M12.2 0.6V5H7.8Z" fill="#334155"/><path d="M0.8 12.4V8H5.2Z" fill="#334155"/></svg>
<div class="abs" style="left:1160.2px;top:909.3px;width:125px;height:29.4px;border:1px solid #cbd5e1;border-radius:6px;background:#fff"></div>
<div class="abs" style="left:1205px;top:910px;width:1px;height:28px;background:#cbd5e1"></div>
<svg class="abs" style="left:1175px;top:916px" width="16" height="16" viewBox="0 0 16 16"><circle cx="6.9" cy="6.7" r="4.7" fill="none" stroke="#334155" stroke-width="1.7"/><path d="M10.5 10.3L14.4 14.2" stroke="#334155" stroke-width="1.8" stroke-linecap="round"/></svg>
<div class="abs" style="left:1216.6px;top:916px;width:53.5px;height:17px;overflow:hidden;font-size:13.5px;line-height:16px;color:#94a3b8;white-space:nowrap">Tìm kiếm...</div>
</div>
</div>
</body>
</html>
